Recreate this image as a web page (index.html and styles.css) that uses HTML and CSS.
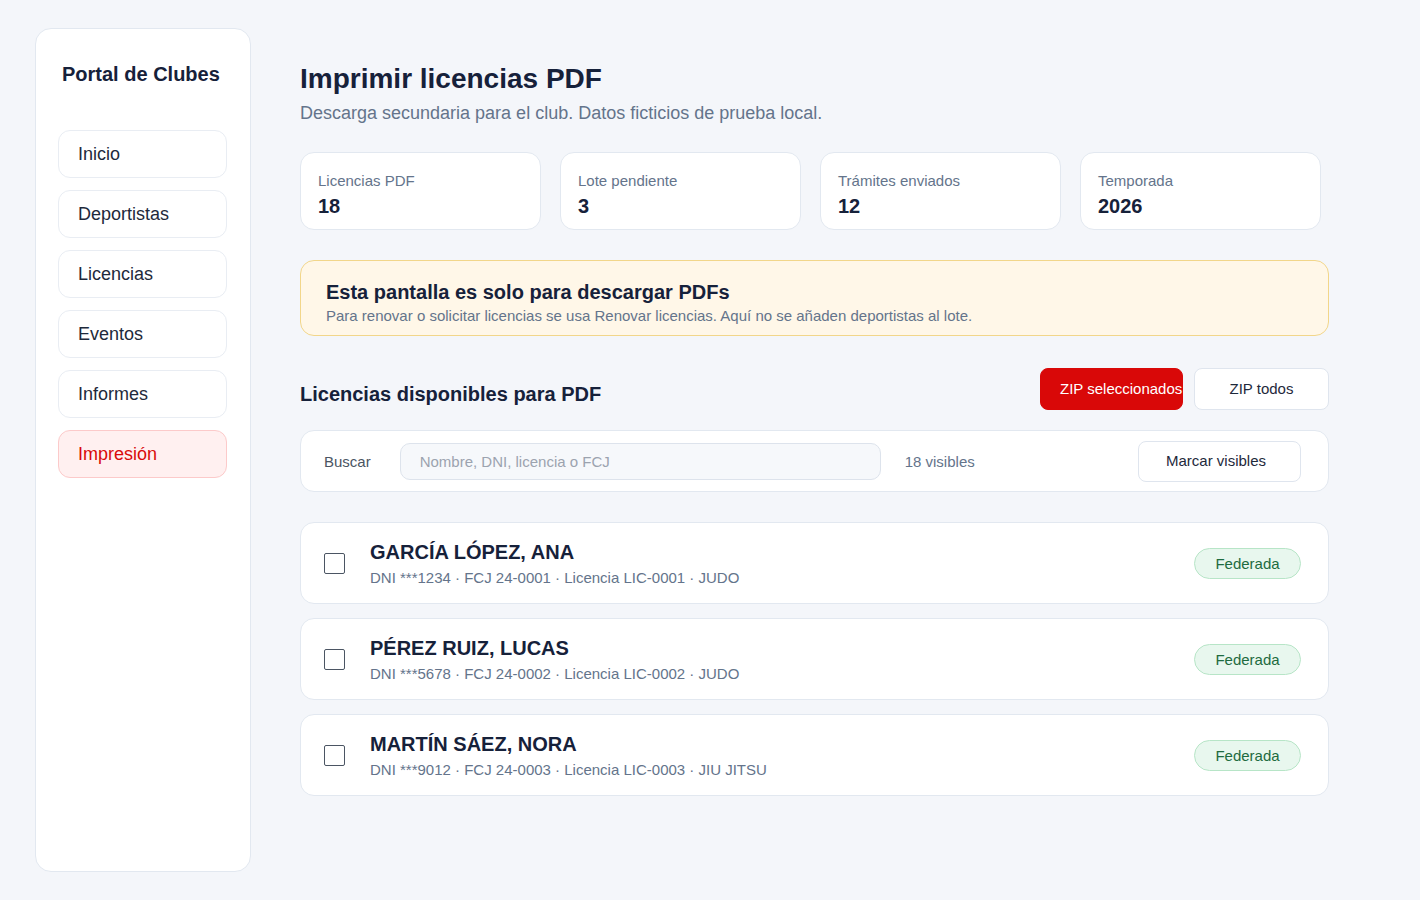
FILE: index.html
```html
<!DOCTYPE html>
<html lang="es">
<head>
  <meta charset="UTF-8">
  <title>Imprimir licencias PDF</title>
  <link rel="stylesheet" href="styles.css">
</head>
<body>

  <aside class="sidebar">
    <h2 class="marca">Portal de Clubes</h2>
    <nav class="menu">
      <a href="#">Inicio</a>
      <a href="#">Deportistas</a>
      <a href="#">Licencias</a>
      <a href="#">Eventos</a>
      <a href="#">Informes</a>
      <a href="#" class="activo">Impresión</a>
    </nav>
  </aside>

  <main class="contenido">
    <h1>Imprimir licencias PDF</h1>
    <p class="subtitulo">Descarga secundaria para el club. Datos ficticios de prueba local.</p>

    <div class="resumen">
      <div class="dato">
        <span>Licencias PDF</span>
        <strong>18</strong>
      </div>
      <div class="dato">
        <span>Lote pendiente</span>
        <strong>3</strong>
      </div>
      <div class="dato">
        <span>Trámites enviados</span>
        <strong>12</strong>
      </div>
      <div class="dato">
        <span>Temporada</span>
        <strong>2026</strong>
      </div>
    </div>

    <div class="aviso">
      <h3>Esta pantalla es solo para descargar PDFs</h3>
      <p>Para renovar o solicitar licencias se usa Renovar licencias. Aquí no se añaden deportistas al lote.</p>
    </div>

    <div class="cabecera">
      <h2>Licencias disponibles para PDF</h2>
      <div class="acciones">
        <button class="btn btn-rojo">ZIP seleccionados</button>
        <button class="btn btn-todos">ZIP todos</button>
      </div>
    </div>

    <div class="buscador">
      <label for="buscar">Buscar</label>
      <input id="buscar" type="text" placeholder="Nombre, DNI, licencia o FCJ">
      <span class="visibles">18 visibles</span>
      <button class="btn btn-marcar">Marcar visibles</button>
    </div>

    <ul class="lista">
      <li class="fila">
        <span class="check"></span>
        <div class="info">
          <h4>GARCÍA LÓPEZ, ANA</h4>
          <p>DNI ***1234 · FCJ 24-0001 · Licencia LIC-0001 · JUDO</p>
        </div>
        <span class="estado">Federada</span>
      </li>
      <li class="fila">
        <span class="check"></span>
        <div class="info">
          <h4>PÉREZ RUIZ, LUCAS</h4>
          <p>DNI ***5678 · FCJ 24-0002 · Licencia LIC-0002 · JUDO</p>
        </div>
        <span class="estado">Federada</span>
      </li>
      <li class="fila">
        <span class="check"></span>
        <div class="info">
          <h4>MARTÍN SÁEZ, NORA</h4>
          <p>DNI ***9012 · FCJ 24-0003 · Licencia LIC-0003 · JIU JITSU</p>
        </div>
        <span class="estado">Federada</span>
      </li>
    </ul>
  </main>

</body>
</html>
```

FILE: styles.css
```css
* {
  box-sizing: border-box;
}

body {
  margin: 0;
  padding: 28px 35px;
  display: flex;
  align-items: flex-start;
  font-family: "Liberation Sans", Arial, sans-serif;
  background-color: #f4f6fa;
  color: #16213a;
}

/* barra lateral */
.sidebar {
  width: 216px;
  min-height: 844px;
  flex-shrink: 0;
  background: #fff;
  border: 1px solid #e2e8f0;
  border-radius: 16px;
  padding: 30px 23px 30px 22px;
}

.marca {
  margin: 0 0 41px 4px;
  font-size: 20px;
  line-height: 30px;
  color: #16213a;
}

.menu {
  display: flex;
  flex-direction: column;
  gap: 12px;
}

.menu a {
  display: block;
  height: 48px;
  line-height: 46px;
  padding: 0 19px;
  border: 1px solid #e9edf3;
  border-radius: 12px;
  font-size: 18px;
  color: #1e293b;
  text-decoration: none;
}

.menu a.activo {
  background: #fff0f0;
  border-color: #fccaca;
  color: #d90a0a;
}

/* contenido */
.contenido {
  width: 1029px;
  margin-left: 49px;
  padding-top: 34px;
}

h1 {
  margin: 0;
  font-size: 28px;
  line-height: 34px;
  color: #16213a;
}

.subtitulo {
  margin: 5px 0 0;
  font-size: 18px;
  line-height: 24px;
  color: #64748b;
}

.resumen {
  display: grid;
  grid-template-columns: repeat(4, 241px);
  gap: 19px;
  margin-top: 27px;
}

.dato {
  height: 78px;
  background: #fff;
  border: 1px solid #e2e8f0;
  border-radius: 14px;
  padding: 18px 17px;
}

.dato span {
  display: block;
  font-size: 15px;
  line-height: 20px;
  color: #64748b;
}

.dato strong {
  display: block;
  margin-top: 4px;
  font-size: 20px;
  line-height: 22px;
  color: #16213a;
}

.aviso {
  margin-top: 30px;
  background: #fff7e8;
  border: 1px solid #f2d68a;
  border-radius: 14px;
  padding: 18px 25px 10px;
  height: 76px;
}

.aviso h3 {
  margin: 0;
  font-size: 20px;
  line-height: 26px;
  color: #16213a;
}

.aviso p {
  margin: 1px 0 0;
  font-size: 15px;
  line-height: 20px;
  color: #64748b;
}

.cabecera {
  display: flex;
  justify-content: space-between;
  align-items: center;
  margin-top: 32px;
}

.cabecera h2 {
  margin: 10px 0 0;
  font-size: 20px;
  color: #16213a;
}

.acciones {
  display: flex;
  gap: 11px;
}

.btn {
  height: 42px;
  padding: 0 20px 1px;
  background: #fff;
  border: 1px solid #dfe5ee;
  border-radius: 8px;
  font-family: inherit;
  font-size: 15px;
  color: #1e293b;
  cursor: pointer;
}

.btn-rojo {
  width: 143px;
  padding-left: 19px;
  padding-right: 0;
  text-align: left;
  white-space: nowrap;
  background: #d90808;
  border-color: #d90808;
  color: #fff;
}

.btn-todos {
  width: 135px;
}

.buscador {
  display: flex;
  align-items: center;
  height: 62px;
  margin-top: 20px;
  padding: 0 27px 0 23px;
  background: #fff;
  border: 1px solid #e2e8f0;
  border-radius: 14px;
}

.buscador label {
  font-size: 15px;
  color: #4b5563;
}

.buscador input {
  width: 481px;
  height: 37px;
  margin-left: 29px;
  padding: 0 19px;
  background: #f6f8fb;
  border: 1px solid #dde3ec;
  border-radius: 10px;
  font-family: inherit;
  font-size: 15px;
  color: #1e293b;
}

.buscador input::placeholder {
  color: #9ca3af;
}

.visibles {
  margin-left: 24px;
  font-size: 15px;
  color: #64748b;
}

.btn-marcar {
  width: 163px;
  height: 41px;
  margin-left: auto;
  padding-right: 27px;
}

.lista {
  list-style: none;
  margin: 30px 0 0;
  padding: 0;
  display: flex;
  flex-direction: column;
  gap: 14px;
}

.fila {
  display: flex;
  align-items: center;
  height: 82px;
  padding: 0 27px 0 23px;
  background: #fff;
  border: 1px solid #e2e8f0;
  border-radius: 14px;
}

.check {
  width: 21px;
  height: 21px;
  margin-top: 1px;
  border: 1.5px solid #4b5563;
  border-radius: 2px;
  flex-shrink: 0;
}

.info {
  margin-left: 25px;
}

.info h4 {
  margin: 0;
  font-size: 20px;
  line-height: 26px;
  color: #16213a;
}

.info p {
  margin: 3px 0 0;
  font-size: 15px;
  line-height: 20px;
  color: #64748b;
}

.estado {
  margin-left: auto;
  width: 107px;
  height: 31px;
  line-height: 29px;
  text-align: center;
  background: #e8f7ee;
  border: 1px solid #b7e5c7;
  border-radius: 16px;
  font-size: 15px;
  color: #1e6b40;
}
```
